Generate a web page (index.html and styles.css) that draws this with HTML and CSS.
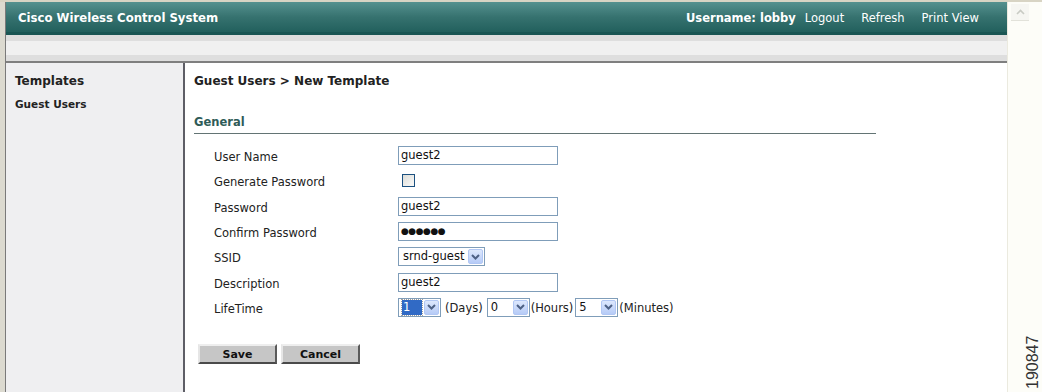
FILE: index.html
```html
<!DOCTYPE html>
<html lang="en">
<head>
    <meta charset="UTF-8">
    <title>Cisco Wireless Control System</title>
    <link rel="stylesheet" href="styles.css">
</head>
<body>
    <div class="window">
        <div class="page">
            <!-- Top banner -->
            <div class="banner">
                <div class="brand">Cisco Wireless Control System</div>
                <div class="user-links">
                    <span class="username">Username: lobby</span>
                    <a class="link-first">Logout</a>
                    <a>Refresh</a>
                    <a>Print View</a>
                </div>
            </div>
            <div class="toolbar"><div class="toolbar-inner"></div></div>

            <div class="main">
                <!-- Left menu -->
                <div class="sidebar">
                    <h2>Templates</h2>
                    <div class="side-item">Guest Users</div>
                </div>

                <!-- Form -->
                <div class="content">
                    <h1>Guest Users &gt; New Template</h1>
                    <h3 class="section">General</h3>

                    <div class="form">
                        <div class="row">
                            <label>User Name</label>
                            <div class="textbox">guest2</div>
                        </div>
                        <div class="row">
                            <label>Generate Password</label>
                            <div class="checkbox"></div>
                        </div>
                        <div class="row">
                            <label>Password</label>
                            <div class="textbox">guest2</div>
                        </div>
                        <div class="row">
                            <label>Confirm Password</label>
                            <div class="textbox dots">&#9679;&#9679;&#9679;&#9679;&#9679;&#9679;</div>
                        </div>
                        <div class="row">
                            <label>SSID</label>
                            <div class="select">
                                <span class="value">srnd-guest</span>
                                <span class="arrow"><svg width="9" height="6" viewBox="0 0 9 6"><path d="M1 1 L4.5 4.5 L8 1" fill="none" stroke="#4d6185" stroke-width="2"/></svg></span>
                            </div>
                        </div>
                        <div class="row">
                            <label>Description</label>
                            <div class="textbox">guest2</div>
                        </div>
                        <div class="row">
                            <label>LifeTime</label>
                            <div class="lifetime">
                                <div class="select small">
                                    <span class="value"><span class="selected">1</span></span>
                                    <span class="arrow"><svg width="9" height="6" viewBox="0 0 9 6"><path d="M1 1 L4.5 4.5 L8 1" fill="none" stroke="#4d6185" stroke-width="2"/></svg></span>
                                </div>
                                <span class="unit">(Days)</span>
                                <div class="select small">
                                    <span class="value">0</span>
                                    <span class="arrow"><svg width="9" height="6" viewBox="0 0 9 6"><path d="M1 1 L4.5 4.5 L8 1" fill="none" stroke="#4d6185" stroke-width="2"/></svg></span>
                                </div>
                                <span class="unit tight">(Hours)</span>
                                <div class="select small">
                                    <span class="value">5</span>
                                    <span class="arrow"><svg width="9" height="6" viewBox="0 0 9 6"><path d="M1 1 L4.5 4.5 L8 1" fill="none" stroke="#4d6185" stroke-width="2"/></svg></span>
                                </div>
                                <span class="unit tight">(Minutes)</span>
                            </div>
                        </div>
                    </div>

                    <div class="buttons">
                        <button type="button">Save</button>
                        <button type="button">Cancel</button>
                    </div>
                </div>
            </div>
        </div>

        <!-- Browser scrollbar -->
        <div class="scrollbar">
            <div class="scroll-up"><svg width="9" height="6" viewBox="0 0 9 6"><path d="M1 5 L4.5 1.5 L8 5" fill="none" stroke="#c9cbc4" stroke-width="1.6"/></svg></div>
            <div class="figure-id">190847</div>
        </div>
    </div>
</body>
</html>
```

FILE: styles.css
```css
/* Basic Reset */
* {
    margin: 0;
    padding: 0;
    box-sizing: border-box;
}

html, body {
    height: 100%;
}

body {
    font-family: 'DejaVu Sans', Verdana, sans-serif;
    background-color: #fff;
    color: #222;
    overflow: hidden;
}

.window {
    display: flex;
    height: 392px;
    border-top: 2px solid #d8d4c4;
    padding-left: 5px;
    background-color: #dcdad0;
}

.page {
    width: 1002px;
    display: flex;
    flex-direction: column;
    border-left: 1px solid #7a7a7a;
    background-color: #fff;
}

/* Banner */
.banner {
    height: 33px;
    display: flex;
    align-items: center;
    justify-content: space-between;
    padding: 1px 28px 0 12px;
    background: linear-gradient(to bottom, #55918f 0%, #36726f 50%, #22605d 100%);
    color: #fff;
    border-bottom: 3px solid #1a5654;
}

.brand {
    font-size: 11.7px;
    font-weight: bold;
}

.user-links {
    display: flex;
    align-items: center;
    font-size: 11.5px;
}

.username {
    font-weight: bold;
    font-size: 11.5px;
    margin-right: 9px;
}

.user-links a {
    margin-left: 17px;
    color: #fff;
}

.user-links a.link-first {
    margin-left: 0;
}

.toolbar {
    height: 28px;
    background-color: #dedede;
    padding: 6px 0;
    border-bottom: 2px solid #7f7f7f;
}

.toolbar-inner {
    height: 14px;
    background-color: #f0f0f0;
}

/* Main area */
.main {
    flex: 1;
    display: flex;
}

.sidebar {
    width: 179px;
    background-color: #efeff1;
    border-right: 2px solid #5e5e66;
    padding: 11px 9px;
}

.sidebar h2 {
    font-size: 12px;
    font-weight: bold;
    color: #222;
    margin-bottom: 10px;
}

.side-item {
    font-size: 10.5px;
    font-weight: bold;
    color: #222;
}

.content {
    flex: 1;
    padding: 11px 0 0 9px;
}

.content h1 {
    font-size: 12px;
    font-weight: bold;
    color: #222;
    margin-bottom: 27px;
}

.section {
    width: 682px;
    font-size: 11.5px;
    font-weight: bold;
    color: #2f5b58;
    padding-bottom: 4px;
    border-bottom: 1px solid #637474;
    margin-bottom: 9px;
}

/* Form rows */
.form {
    padding-left: 20px;
}

.row {
    display: flex;
    align-items: center;
    height: 25.3px;
}

.row label {
    width: 184px;
    font-size: 11.5px;
    color: #222;
    padding-top: 3px;
}

.textbox {
    width: 160px;
    height: 19px;
    border: 1px solid #7f9db9;
    font-size: 11.5px;
    padding: 1px 2px;
    line-height: 15px;
    color: #111;
}

.textbox.dots {
    font-size: 9px;
    letter-spacing: -0.5px;
}

.checkbox {
    width: 13px;
    height: 13px;
    margin-left: 4px;
    border: 1px solid #1c5180;
    background: linear-gradient(135deg, #dcdcd7 0%, #f5f5f3 80%);
}

.select {
    display: flex;
    align-items: center;
    height: 19px;
    border: 1px solid #7f9db9;
    padding: 1px;
    background-color: #fff;
}

.select .value {
    font-size: 11.5px;
    padding: 0 4px 0 3px;
    line-height: 15px;
    color: #111;
}

.select .arrow {
    width: 15px;
    height: 15px;
    display: flex;
    align-items: center;
    justify-content: center;
    background: linear-gradient(to bottom, #dde8fd 0%, #b6cbf7 100%);
    border: 1px solid #b1c7f4;
    border-radius: 2px;
}

.select.small .value {
    width: 24px;
    padding: 0 2px;
}

.select.small .value .selected {
    display: inline-block;
    width: 20px;
    background-color: #316ac5;
    color: #fff;
    padding-left: 1px;
    outline: 1px dotted #a0a0a0;
}

.lifetime {
    display: flex;
    align-items: center;
    font-size: 11.5px;
}

.unit {
    margin: 0 4px 0 4px;
    padding-top: 1px;
}

.unit.tight {
    margin-left: 1px;
    margin-right: 2px;
}

/* Buttons */
.buttons {
    display: flex;
    gap: 4px;
    margin: 24px 0 0 4px;
}

button {
    width: 79px;
    height: 20px;
    font-family: 'DejaVu Sans', Verdana, sans-serif;
    font-size: 11px;
    font-weight: bold;
    color: #111;
    background-color: #c6c6c6;
    border: 2px solid;
    border-color: #eeeeee #5a5a5a #4a4a4a #e6e6e6;
    cursor: pointer;
}

/* Scrollbar strip on the right */
.scrollbar {
    flex: 1;
    position: relative;
    background-color: #fdfdf8;
    border-left: 1px solid #ebeadf;
}

.scroll-up {
    margin: 2px 0 0 3px;
    width: 18px;
    height: 17px;
    display: flex;
    align-items: center;
    justify-content: center;
    border-bottom: 1px solid #e2e2da;
    background-color: #f6f6f2;
}

.figure-id {
    position: absolute;
    left: 0;
    bottom: 3px;
    transform: rotate(-90deg);
    transform-origin: left bottom;
    translate: 33px 0;
    font-family: 'Liberation Sans', Arial, sans-serif;
    font-size: 16px;
    line-height: 16px;
    color: #333;
}
```
